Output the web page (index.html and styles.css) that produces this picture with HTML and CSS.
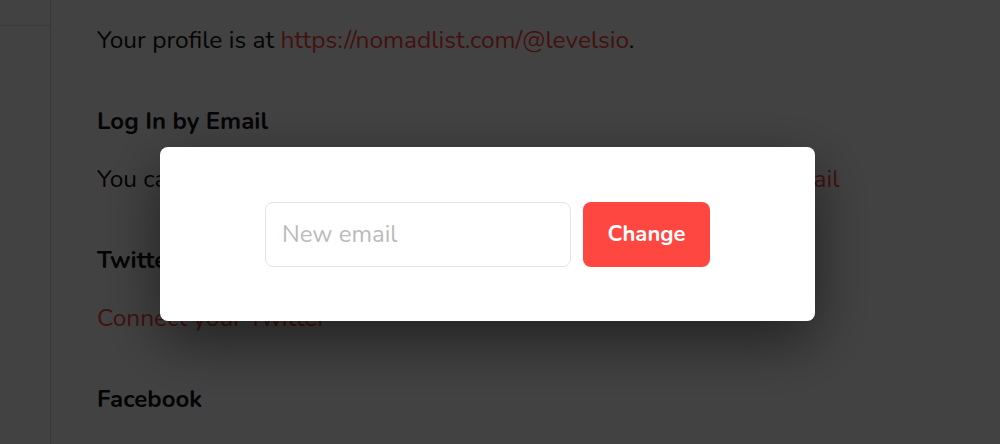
FILE: index.html
```html
<!DOCTYPE html>
<html lang="en">
<head>
  <meta charset="UTF-8" />
  <meta name="viewport" content="width=device-width, initial-scale=1.0"/>
  <title>Settings</title>
  <link rel="stylesheet" href="styles.css">
</head>
<body>
  <div class="layout">
    <aside class="sidebar">
      <div class="sidebar-top"></div>
    </aside>

    <main class="content">
      <p>Your profile is at <a href="#">https://nomadlist.com/@levelsio</a>.</p>

      <h3>Log In by Email</h3>
      <p>You can log in by email with levelsio@nomadlist.com. <a href="#">Change email</a></p>

      <h3>Twitter</h3>
      <p><a href="#">Connect your Twitter</a></p>

      <h3>Facebook</h3>
    </main>
  </div>

  <!-- modal on top of the settings page -->
  <div class="overlay"></div>

  <div class="modal">
    <input type="email" class="email-input" placeholder="New email">
    <button class="change-btn">Change</button>
  </div>
</body>
</html>
```

FILE: styles.css
```css
* {
  margin: 0;
  padding: 0;
  box-sizing: border-box;
  font-family: 'Nunito', 'Lato', sans-serif;
}

body {
  background: #fff;
  color: #111;
  height: 100vh;
  overflow: hidden;
}

.layout {
  display: flex;
  height: 100%;
}

.sidebar {
  width: 51px;
  border-right: 1px solid #d8d8d8;
  flex-shrink: 0;
}

.sidebar-top {
  height: 26px;
  border-bottom: 1px solid #e2e2e2;
}

.content {
  padding: 22px 0 0 46px;
  font-size: 24.5px;
}

.content p {
  line-height: 36px;
  margin-bottom: 45px;
}

.content h3 {
  font-size: 24px;
  font-weight: 700;
  line-height: 36px;
  margin-bottom: 22px;
}

.content a {
  color: #ff4742;
  text-decoration: none;
}

.overlay {
  position: fixed;
  top: 0;
  left: 0;
  width: 100%;
  height: 100%;
  background: rgba(0, 0, 0, 0.74);
  z-index: 5;
}

.modal {
  position: fixed;
  top: 147px;
  left: 160px;
  width: 655px;
  height: 174px;
  background: #fff;
  border-radius: 8px;
  box-shadow: 0 20px 60px rgba(0, 0, 0, 0.5);
  z-index: 10;
  display: flex;
  align-items: center;
  justify-content: center;
  gap: 12px;
}

.email-input {
  width: 306px;
  height: 65px;
  border: 1px solid #e4e4e4;
  border-radius: 8px;
  padding: 0 16px;
  font-size: 24px;
  color: #333;
  outline: none;
}

.email-input::placeholder {
  color: #bbb;
}

.change-btn {
  width: 127px;
  height: 65px;
  border: none;
  border-radius: 8px;
  background: #ff4742;
  color: #fff;
  font-size: 22px;
  font-weight: 700;
  cursor: pointer;
}
```
